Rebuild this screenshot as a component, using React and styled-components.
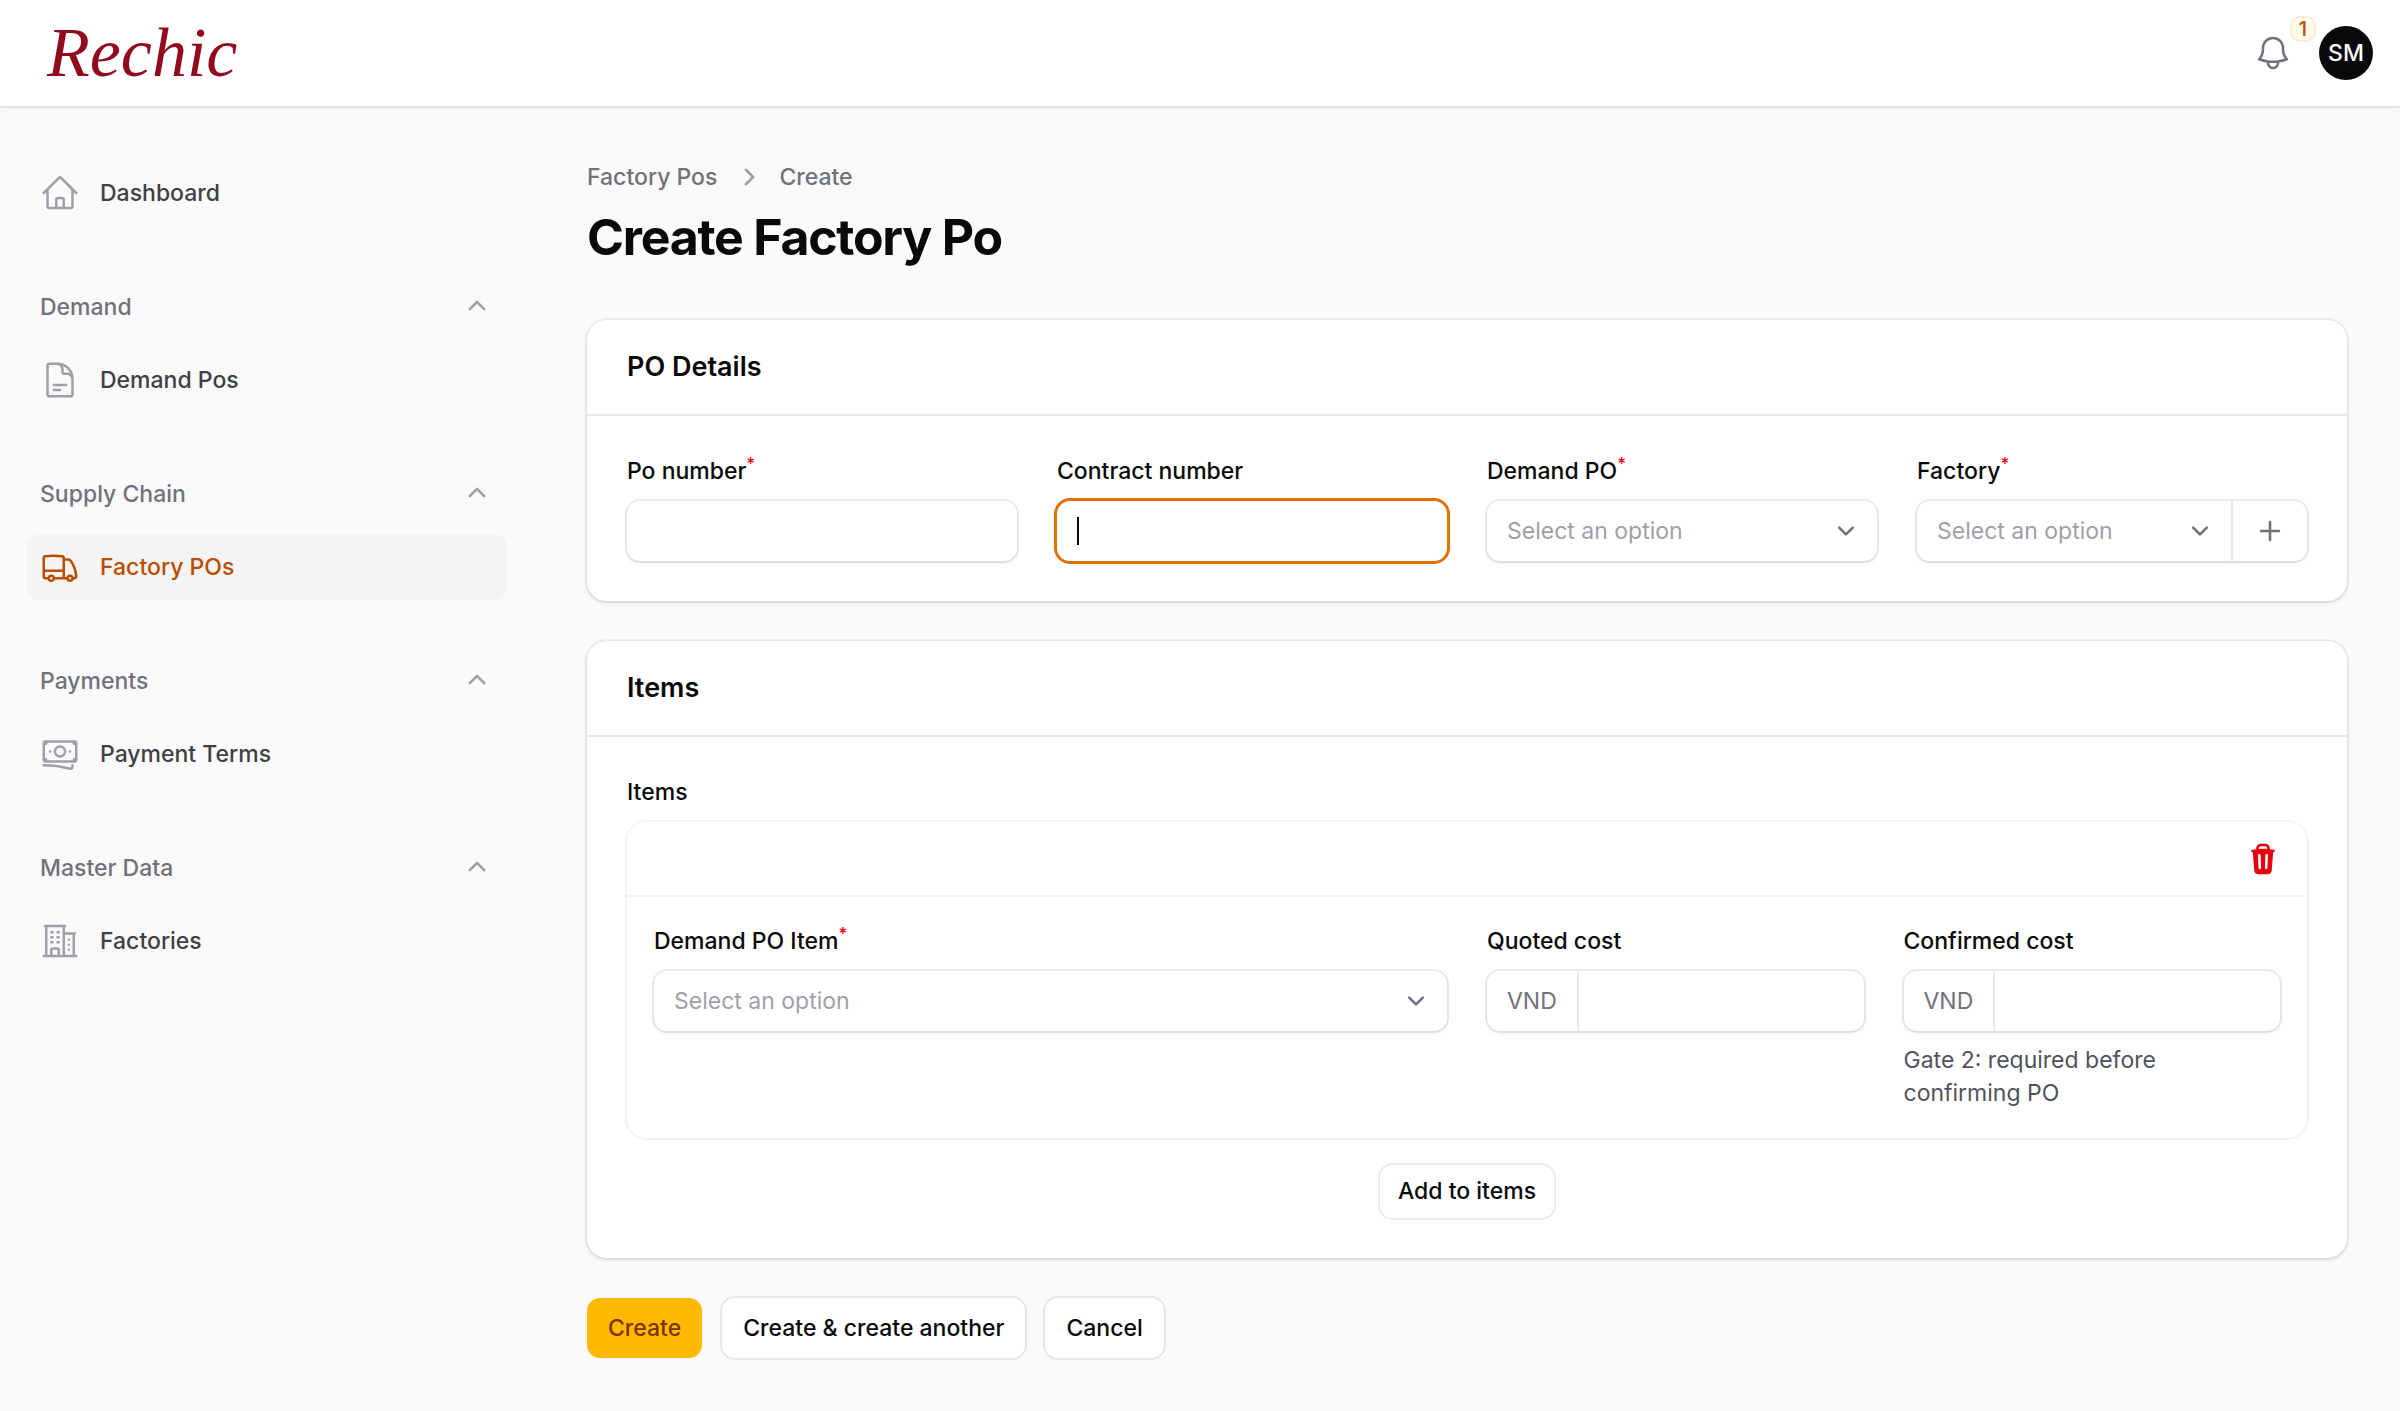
import React, {useState} from 'react'
import styled, {createGlobalStyle} from 'styled-components'
import {
  HiOutlineHome,
  HiOutlineDocumentText,
  HiOutlineTruck,
  HiOutlineBanknotes,
  HiOutlineBuildingOffice2,
  HiOutlineBell,
  HiMiniChevronUp,
  HiMiniChevronRight,
  HiMiniPlus,
  HiMiniTrash
} from 'react-icons/hi2'

const GlobalStyle = createGlobalStyle`
  *, *::before, *::after {
    box-sizing: border-box;
  }
  body {
    margin: 0;
    background: #fafafa;
    color: #09090b;
    font-family: Inter, "Liberation Sans", sans-serif;
    font-size: 23px;
    line-height: 33px;
    -webkit-font-smoothing: antialiased;
  }
  button, input, select {
    font: inherit;
    color: inherit;
    margin: 0;
    padding: 0;
    border: none;
    background: none;
    outline: none;
  }
  button {
    cursor: pointer;
  }
  a {
    color: inherit;
    text-decoration: none;
  }
  svg {
    display: block;
    flex-shrink: 0;
  }
`;

const Topbar = styled.header`
  display: flex;
  align-items: center;
  justify-content: space-between;
  height: 106px;
  padding: 0 27px 0 47px;
  background: #fff;
  box-shadow: 0 0 0 2px rgba(9, 9, 11, 0.05), 0 2px 4px rgba(0, 0, 0, 0.06);
`;

const Logo = styled.a`
  font-family: "Liberation Serif", serif;
  font-size: 70px;
  font-style: italic;
  line-height: 80px;
  color: #910a1e;
  white-space: nowrap;
`;

const TopbarEnd = styled.div`
  display: flex;
  align-items: center;
  gap: 16px;
`;

const BellButton = styled.button`
  position: relative;
  display: flex;
  align-items: center;
  justify-content: center;
  width: 60px;
  height: 60px;
  color: #71717b;
  font-size: 40px;
`;

const Badge = styled.span`
  position: absolute;
  top: -7px;
  right: -13px;
  min-width: 26px;
  padding: 0 6px;
  border-radius: 10px;
  background: #fffbeb;
  box-shadow: inset 0 0 0 2px rgba(225, 113, 0, 0.1);
  color: #bb4d00;
  font-size: 20px;
  font-weight: 500;
  line-height: 26px;
`;

const Avatar = styled.button`
  width: 54px;
  height: 54px;
  border-radius: 50%;
  background: #09090b;
  color: #fff;
  font-weight: 500;
`;

const Layout = styled.div`
  display: flex;
  align-items: flex-start;
`;

const Sidebar = styled.nav`
  display: flex;
  flex-direction: column;
  flex: 0 0 533px;
  gap: 51px;
  padding: 54px 26px 54px 27px;
`;

const NavGroup = styled.div`
  display: flex;
  flex-direction: column;
  gap: 10px;
`;

const GroupButton = styled.button`
  display: flex;
  align-items: center;
  justify-content: space-between;
  height: 60px;
  padding: 0 13px;
  color: #71717b;
  font-weight: 500;

  svg {
    width: 34px;
    height: 34px;
    color: #9f9fa9;
  }
`;

const NavItem = styled.a`
  display: flex;
  align-items: center;
  gap: 20px;
  height: 66px;
  padding: 0 13px;
  border-radius: 13px;
  background: ${props => props.$active ? '#f4f4f5' : 'transparent'};
  color: ${props => props.$active ? '#bb4d00' : '#3f3f46'};
  font-weight: 500;

  svg {
    width: 40px;
    height: 40px;
    color: ${props => props.$active ? '#bb4d00' : '#9f9fa9'};
  }
`;

const Main = styled.main`
  flex: 1;
  min-width: 0;
  padding: 54px 53px 53px 54px;
`;

const Breadcrumbs = styled.nav`
  display: flex;
  align-items: center;
  gap: 14px;
  color: #71717b;
  font-weight: 500;

  svg {
    width: 34px;
    height: 34px;
    color: #9f9fa9;
  }
`;

const Title = styled.h1`
  margin: 13px 0 53px;
  font-size: 50px;
  font-weight: 700;
  line-height: 60px;
  letter-spacing: -0.025em;
`;

const Form = styled.form`
  display: flex;
  flex-direction: column;
  gap: 40px;
`;

const Card = styled.section`
  border-radius: 20px;
  background: #fff;
  box-shadow: 0 0 0 2px rgba(9, 9, 11, 0.05), 0 2px 4px rgba(0, 0, 0, 0.1);
`;

const CardHeader = styled.h2`
  margin: 0;
  padding: 27px 40px;
  border-bottom: 2px solid #e9e9ea;
  font-size: 27px;
  font-weight: 600;
  line-height: 40px;
`;

const CardBody = styled.div`
  padding: 39px 40px 40px;
`;

const Fields = styled.div`
  display: grid;
  grid-template-columns: repeat(4, minmax(0, 1fr));
  align-items: start;
  gap: 40px;
`;

const FieldBox = styled.div`
  display: flex;
  flex-direction: column;
  gap: 13px;
  grid-column: span ${props => props.$span || 1};
`;

const Label = styled.label`
  font-weight: 500;

  sup {
    color: #e7000b;
    font-size: 17px;
    line-height: 0;
  }
`;

const Control = styled.div`
  display: flex;
  height: 60px;
  border-radius: 13px;
  background: #fff;
  box-shadow: ${props => props.$focused
    ? '0 0 0 3px #e17100'
    : '0 0 0 2px rgba(9, 9, 11, 0.08), 0 2px 4px rgba(0, 0, 0, 0.08)'};
`;

const Input = styled.input`
  flex: 1;
  min-width: 0;
  padding: 0 20px;
`;

const Caret = styled.span`
  align-self: center;
  width: 2px;
  height: 28px;
  margin-left: 20px;
  background: #09090b;
`;

const SelectWrap = styled.div`
  position: relative;
  display: flex;
  flex: 1;
  min-width: 0;

  svg {
    position: absolute;
    top: 13px;
    right: 14px;
    width: 34px;
    height: 34px;
    pointer-events: none;
  }
`;

const SelectInput = styled.select`
  appearance: none;
  flex: 1;
  min-width: 0;
  padding: 0 60px 0 20px;
  color: #9f9fa9;
`;

const SuffixButton = styled.button`
  display: flex;
  align-items: center;
  padding: 0 20px;
  border-left: 2px solid #e9e9ea;
  color: #71717b;
  font-size: 34px;
`;

const Prefix = styled.span`
  display: flex;
  align-items: center;
  padding: 0 20px;
  border-right: 2px solid #e9e9ea;
  color: #71717b;
`;

const Hint = styled.p`
  margin: 0;
  padding-right: 20px;
  color: #52525c;
`;

const RepeaterLabel = styled.h3`
  margin: 0 0 13px;
  font-size: 23px;
  font-weight: 500;
`;

const RepeaterItem = styled.div`
  border-radius: 20px;
  box-shadow: 0 0 0 2px rgba(9, 9, 11, 0.04), 0 2px 4px rgba(0, 0, 0, 0.02);
`;

const RepeaterHeader = styled.div`
  display: flex;
  justify-content: flex-end;
  padding: 20px 27px 19px;
  border-bottom: 2px solid #f4f4f5;
`;

const DeleteButton = styled.button`
  color: #e7000b;
  font-size: 34px;
`;

const RepeaterBody = styled.div`
  padding: 28px 27px;
`;

const AddRow = styled.div`
  display: flex;
  justify-content: center;
  margin-top: 27px;
`;

const Button = styled.button`
  height: ${props => props.$small ? '53px' : '60px'};
  padding: 0 ${props => props.$small ? '18px' : '21px'};
  border-radius: 13px;
  background: ${props => props.$primary ? '#ffb900' : '#fff'};
  box-shadow: ${props => props.$primary ? 'none' : '0 0 0 2px rgba(9, 9, 11, 0.08)'};
  color: ${props => props.$primary ? '#7b3306' : '#09090b'};
  font-weight: 500;
`;

const Actions = styled.div`
  display: flex;
  gap: 20px;
`;

const groups = [
  {label: 'Demand', item: 'Demand Pos', icon: HiOutlineDocumentText},
  {label: 'Supply Chain', item: 'Factory POs', icon: HiOutlineTruck, active: true},
  {label: 'Payments', item: 'Payment Terms', icon: HiOutlineBanknotes},
  {label: 'Master Data', item: 'Factories', icon: HiOutlineBuildingOffice2}
]

const SelectChevron = () => (
  <svg viewBox="0 0 20 20" fill="none" stroke="#6b7280" strokeWidth="1.5" strokeLinecap="round" strokeLinejoin="round" aria-hidden="true">
    <path d="m6 8 4 4 4-4" />
  </svg>
)

const Field = ({id, label, required, span, children}) => (
  <FieldBox $span={span}>
    <Label htmlFor={id}>{label}{required && <sup>*</sup>}</Label>
    {children}
  </FieldBox>
)

const Select = ({id}) => (
  <SelectWrap>
    <SelectInput id={id} defaultValue="">
      <option value="">Select an option</option>
    </SelectInput>
    <SelectChevron />
  </SelectWrap>
)

export default function App() {

    const [contract, setContract] = useState('')

    return(
        <>
            <GlobalStyle />
            <Topbar>
                <Logo href="#">Rechic</Logo>
                <TopbarEnd>
                    <BellButton type="button" aria-label="Notifications">
                        <HiOutlineBell />
                        <Badge>1</Badge>
                    </BellButton>
                    <Avatar type="button" aria-label="User menu">SM</Avatar>
                </TopbarEnd>
            </Topbar>
            <Layout>
                <Sidebar>
                    <NavItem href="#"><HiOutlineHome />Dashboard</NavItem>
                    {groups.map(({label, item, icon: Icon, active}) => (
                        <NavGroup key={label}>
                            <GroupButton type="button">{label}<HiMiniChevronUp /></GroupButton>
                            <NavItem href="#" $active={active}><Icon />{item}</NavItem>
                        </NavGroup>
                    ))}
                </Sidebar>
                <Main>
                    <Breadcrumbs aria-label="Breadcrumb">
                        <a href="#">Factory Pos</a>
                        <HiMiniChevronRight />
                        <a href="#">Create</a>
                    </Breadcrumbs>
                    <Title>Create Factory Po</Title>
                    <Form onSubmit={e => e.preventDefault()}>
                        <Card>
                            <CardHeader>PO Details</CardHeader>
                            <CardBody>
                                <Fields>
                                    <Field id="po-number" label="Po number" required>
                                        <Control><Input id="po-number" type="text" /></Control>
                                    </Field>
                                    <Field id="contract-number" label="Contract number">
                                        <Control $focused>
                                            {contract === '' && <Caret />}
                                            <Input
                                                id="contract-number"
                                                type="text"
                                                value={contract}
                                                onChange={e => setContract(e.target.value)}
                                            />
                                        </Control>
                                    </Field>
                                    <Field id="demand-po" label="Demand PO" required>
                                        <Control><Select id="demand-po" /></Control>
                                    </Field>
                                    <Field id="factory" label="Factory" required>
                                        <Control>
                                            <Select id="factory" />
                                            <SuffixButton type="button" aria-label="Add factory"><HiMiniPlus /></SuffixButton>
                                        </Control>
                                    </Field>
                                </Fields>
                            </CardBody>
                        </Card>
                        <Card>
                            <CardHeader>Items</CardHeader>
                            <CardBody>
                                <RepeaterLabel>Items</RepeaterLabel>
                                <RepeaterItem>
                                    <RepeaterHeader>
                                        <DeleteButton type="button" aria-label="Delete item"><HiMiniTrash /></DeleteButton>
                                    </RepeaterHeader>
                                    <RepeaterBody>
                                        <Fields>
                                            <Field id="demand-po-item" label="Demand PO Item" required span={2}>
                                                <Control><Select id="demand-po-item" /></Control>
                                            </Field>
                                            <Field id="quoted-cost" label="Quoted cost">
                                                <Control>
                                                    <Prefix>VND</Prefix>
                                                    <Input id="quoted-cost" type="text" />
                                                </Control>
                                            </Field>
                                            <Field id="confirmed-cost" label="Confirmed cost">
                                                <Control>
                                                    <Prefix>VND</Prefix>
                                                    <Input id="confirmed-cost" type="text" />
                                                </Control>
                                                <Hint>Gate 2: required before confirming PO</Hint>
                                            </Field>
                                        </Fields>
                                    </RepeaterBody>
                                </RepeaterItem>
                                <AddRow>
                                    <Button type="button" $small>Add to items</Button>
                                </AddRow>
                            </CardBody>
                        </Card>
                        <Actions>
                            <Button type="submit" $primary>Create</Button>
                            <Button type="button">Create &amp; create another</Button>
                            <Button type="button">Cancel</Button>
                        </Actions>
                    </Form>
                </Main>
            </Layout>
        </>
    )
}
